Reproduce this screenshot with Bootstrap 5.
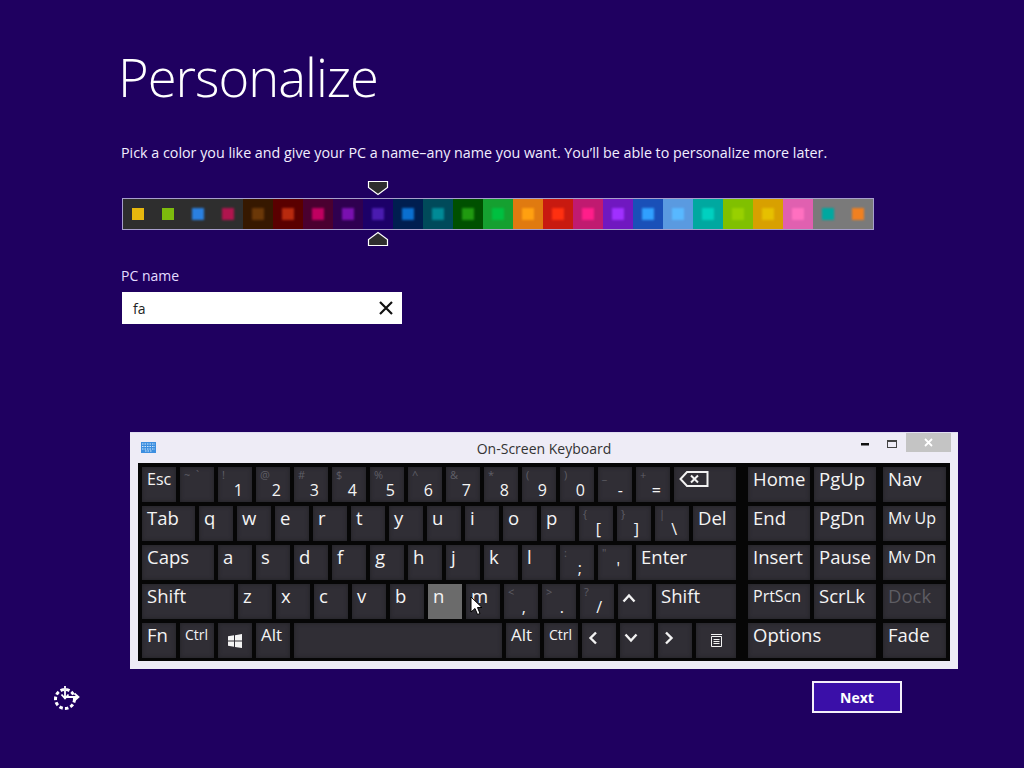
<!DOCTYPE html>
<html lang="en">
<head>
  <meta charset="UTF-8">
  <meta name="viewport" content="width=device-width, initial-scale=1.0">
  <link href="https://cdn.jsdelivr.net/npm/bootstrap@5.3.2/dist/css/bootstrap.min.css" rel="stylesheet">
  <script src="https://cdn.jsdelivr.net/npm/bootstrap@5.3.2/dist/js/bootstrap.bundle.min.js"></script>
  <title>Personalize</title>
  <style>
    body { background: #1f0060; font-family: "Open Sans", "Noto Sans", sans-serif; color: #fff; overflow: hidden; }
    .setup-page { height: 768px; width: 1024px; position: relative; }
    .setup-main { padding: 42px 0 0 121px; }
    .setup-title { font-size: 52.5px; font-weight: 300; line-height: 70px; margin: 0 0 0 -3px; letter-spacing: -1px; }
    .setup-intro { font-size: 14.3px; line-height: 20px; margin: 31px 0 0; color: #f2eeff; }
    .strip-wrap { margin: 35px 0 0 1px; width: 752px; position: relative; }
    .color-strip { display: flex; height: 32px; border: 1px solid #a79fcc; width: 752px; }
    .swatch { width: 30px; height: 30px; flex: none; display: flex; align-items: center; justify-content: center; }
    .swatch i { display: block; width: 12px; height: 12px; }
    .swatch i.soft { filter: blur(1.2px); }
    .strip-arrow { position: absolute; left: 245px; }
    .arrow-top { top: -18px; }
    .arrow-bottom { top: 33px; }
    .pc-label { font-size: 14px; line-height: 20px; margin: 36px 0 6px; color: #e4dcff; }
    .pc-input { width: 280px; height: 32px; margin-left: 1px; background: #fff; color: #222; font-size: 14px; padding: 0 8px 0 11px; }

    .osk-window { position: absolute; left: 130px; top: 432px; width: 828px; height: 237px; background: #eeecf6; padding: 0 8px; border-top: 1px solid #e0def0; }
    .osk-title { height: 30px; position: relative; color: #333; font-size: 14px; }
    .osk-icon { position: absolute; left: 3px; top: 9px; }
    .osk-btns { position: absolute; right: -1px; top: 0; }
    .osk-close { width: 45px; height: 19px; background: #c4c4c4; color: #fff; }
    .osk-board { background: #060606; padding: 4px; height: 198px; gap: 12px; }
    .key-rows { width: 594px; gap: 4px; }
    .key-col { gap: 4px; }
    .key-row { gap: 4px; }
    .kb-key { width: 34px; height: 35px; flex: none; background: #302e35; color: #f4f4f4; font-size: 18.5px; line-height: 24px; padding: 0 0 0 5px; box-shadow: inset 0 0 4px #222126; position: relative; white-space: nowrap; }
    .kb-key.sym { padding: 2px 9px 0 4px; display: flex; flex-direction: column; }
    .kb-key.sym.punct { padding-right: 12px; }
    .sym .up { font-size: 11px; line-height: 12px; color: #5f5e66; }
    .sym .low { font-size: 16px; line-height: 18px; text-align: right; }
    .kb-key.ico { display: flex; align-items: center; justify-content: center; padding: 0; }
    .ico.ico-up { padding: 0 12px 7px 0; }
    .ico.ico-mid { padding: 0 13px 6px 0; }
    .ico.ico-back { justify-content: flex-start; padding: 0 0 11px 5px; }
    .kb-key.key-hot { background: #6b6b6b; box-shadow: none; }
    .t-sm { font-size: 14px; }
    .t-md { font-size: 16px; }
    .t-lg { font-size: 17px; }
    .t-off { color: #5e5d63; }
    .kw-40 { width: 40px; }
    .kw-43 { width: 43px; }
    .kw-53 { width: 53px; }
    .kw-62 { width: 62px; }
    .kw-63 { width: 63px; }
    .kw-72 { width: 72px; }
    .kw-80 { width: 80px; }
    .kw-92 { width: 92px; }
    .kw-100 { width: 100px; }
    .kw-128 { width: 128px; }
    .kw-208 { width: 208px; }
    .nav-gap { margin-left: -5px; }
    .mouse-arrow { position: absolute; left: 4px; top: 12px; }

    .setup-foot { position: absolute; left: 53px; top: 681px; width: 849px; }
    .next-btn { width: 90px; height: 32px; background: #3a0fa8; border: 2px solid #f4effa; border-radius: 0; color: #fff; font-weight: 700; font-size: 14px; padding: 0; }
    .next-btn:hover { background: #3a0fa8; color: #fff; border-color: #f4effa; }
  </style>
</head>
<body>
<div class="setup-page">
  <div class="setup-main">
    <h1 class="setup-title">Personalize</h1>
    <p class="setup-intro">Pick a color you like and give your PC a name–any name you want. You’ll be able to personalize more later.</p>
    <div class="strip-wrap">
      <svg class="strip-arrow arrow-top" width="22" height="16" viewBox="0 0 22 16"><path d="M1.500 1.500h19v6l-9.500 7-9.500-7z" fill="#2d2d2d" stroke="#fff" stroke-width="1.200"/></svg>
      <div class="color-strip" id="strip"></div>
      <svg class="strip-arrow arrow-bottom" width="22" height="16" viewBox="0 0 22 16"><path d="M1.500 14.500h19v-6l-9.500-7-9.500 7z" fill="#2d2d2d" stroke="#fff" stroke-width="1.200"/></svg>
    </div>
    <div class="pc-label">PC name</div>
    <div class="pc-input d-flex align-items-center justify-content-between">
      <span>fa</span>
      <svg width="16" height="16" viewBox="0 0 16 16"><path d="M2 2l12 12M14 2L2 14" stroke="#111" stroke-width="2.200" fill="none"/></svg>
    </div>
  </div>

  <div class="osk-window">
    <div class="osk-title d-flex align-items-center justify-content-center">
      <svg class="osk-icon" width="15" height="11" viewBox="0 0 15 11"><rect width="15" height="11" fill="#3d8fe0"/><path d="M1 2h13M1 4.500h13M1 7h13M4 9h7" stroke="#cfe6fb" stroke-width="1" stroke-dasharray="1.500 1"/></svg>
      <span>On-Screen Keyboard</span>
      <div class="osk-btns d-flex">
        <svg width="45" height="19" viewBox="0 0 45 19"><rect x="0" y="10" width="8" height="2.500" fill="#111"/><rect x="26.500" y="7.500" width="9" height="7" fill="none" stroke="#444"/><rect x="26" y="7" width="10" height="2" fill="#444"/></svg>
        <div class="osk-close d-flex align-items-center justify-content-center">
          <svg width="9" height="9" viewBox="0 0 9 9"><path d="M1 1l7 7M8 1L1 8" stroke="#fff" stroke-width="1.800"/></svg>
        </div>
      </div>
    </div>
    <div class="osk-board d-flex">
      <div class="key-rows d-flex flex-column">
        <div class="key-row d-flex">
          <div class="kb-key t-md">Esc</div>
          <div class="kb-key sym"><span class="up">~ &nbsp;`</span></div>
          <div class="kb-key sym"><span class="up">!</span><span class="low">1</span></div>
          <div class="kb-key sym"><span class="up">@</span><span class="low">2</span></div>
          <div class="kb-key sym"><span class="up">#</span><span class="low">3</span></div>
          <div class="kb-key sym"><span class="up">$</span><span class="low">4</span></div>
          <div class="kb-key sym"><span class="up">%</span><span class="low">5</span></div>
          <div class="kb-key sym"><span class="up">^</span><span class="low">6</span></div>
          <div class="kb-key sym"><span class="up">&amp;</span><span class="low">7</span></div>
          <div class="kb-key sym"><span class="up">*</span><span class="low">8</span></div>
          <div class="kb-key sym"><span class="up">(</span><span class="low">9</span></div>
          <div class="kb-key sym"><span class="up">)</span><span class="low">0</span></div>
          <div class="kb-key sym"><span class="up">_</span><span class="low">-</span></div>
          <div class="kb-key sym"><span class="up">+</span><span class="low">=</span></div>
          <div class="kb-key ico ico-back kw-62">
            <svg width="30" height="16" viewBox="0 0 30 16"><path d="M8 1h20.500v14H8L1.500 8z" fill="none" stroke="#f2f2f2" stroke-width="2"/><path d="M12 4.500l7 7M19 4.500l-7 7" stroke="#f2f2f2" stroke-width="2"/></svg>
          </div>
        </div>
        <div class="key-row d-flex">
          <div class="kb-key kw-53">Tab</div>
          <div class="kb-key">q</div><div class="kb-key">w</div><div class="kb-key">e</div><div class="kb-key">r</div><div class="kb-key">t</div>
          <div class="kb-key">y</div><div class="kb-key">u</div><div class="kb-key">i</div><div class="kb-key">o</div><div class="kb-key">p</div>
          <div class="kb-key sym punct"><span class="up">{</span><span class="low">[</span></div>
          <div class="kb-key sym punct"><span class="up">}</span><span class="low">]</span></div>
          <div class="kb-key sym punct"><span class="up">|</span><span class="low">\</span></div>
          <div class="kb-key kw-43">Del</div>
        </div>
        <div class="key-row d-flex">
          <div class="kb-key kw-72">Caps</div>
          <div class="kb-key">a</div><div class="kb-key">s</div><div class="kb-key">d</div><div class="kb-key">f</div><div class="kb-key">g</div>
          <div class="kb-key">h</div><div class="kb-key">j</div><div class="kb-key">k</div><div class="kb-key">l</div>
          <div class="kb-key sym punct"><span class="up">:</span><span class="low">;</span></div>
          <div class="kb-key sym punct"><span class="up">"</span><span class="low">'</span></div>
          <div class="kb-key kw-100">Enter</div>
        </div>
        <div class="key-row d-flex">
          <div class="kb-key kw-92">Shift</div>
          <div class="kb-key">z</div><div class="kb-key">x</div><div class="kb-key">c</div><div class="kb-key">v</div><div class="kb-key">b</div>
          <div class="kb-key key-hot">n</div>
          <div class="kb-key">m
            <svg class="mouse-arrow" width="13" height="20" viewBox="0 0 13 20"><path d="M1 1v15l4-3.500 2.500 6 2.500-1-2.500-6H12z" fill="#fff" stroke="#000" stroke-width="1"/></svg>
          </div>
          <div class="kb-key sym punct"><span class="up">&lt;</span><span class="low">,</span></div>
          <div class="kb-key sym punct"><span class="up">&gt;</span><span class="low">.</span></div>
          <div class="kb-key sym punct"><span class="up">?</span><span class="low">/</span></div>
          <div class="kb-key ico ico-up"><svg width="14" height="10" viewBox="0 0 14 10"><path d="M1.500 8.500L7 2.500l5.500 6" fill="none" stroke="#f2f2f2" stroke-width="2.400"/></svg></div>
          <div class="kb-key kw-80">Shift</div>
        </div>
        <div class="key-row d-flex">
          <div class="kb-key">Fn</div>
          <div class="kb-key t-sm">Ctrl</div>
          <div class="kb-key ico"><svg width="14" height="14" viewBox="0 0 14 14"><path d="M0 2.200L6 1.300v5.200H0zM7 1.200L14 0v6.500H7zM0 7.500h6v5.200L0 11.800zM7 7.500h7V14l-7-1.100z" fill="#f4f4f4"/></svg></div>
          <div class="kb-key t-lg">Alt</div>
          <div class="kb-key kw-208"></div>
          <div class="kb-key t-lg">Alt</div>
          <div class="kb-key t-sm">Ctrl</div>
          <div class="kb-key ico ico-mid"><svg width="10" height="14" viewBox="0 0 10 14"><path d="M8 1.500L2.500 7 8 12.500" fill="none" stroke="#f2f2f2" stroke-width="2.400"/></svg></div>
          <div class="kb-key ico ico-mid"><svg width="14" height="10" viewBox="0 0 14 10"><path d="M1.500 1.500L7 7.500l5.500-6" fill="none" stroke="#f2f2f2" stroke-width="2.400"/></svg></div>
          <div class="kb-key ico ico-mid"><svg width="10" height="14" viewBox="0 0 10 14"><path d="M2 1.500L7.500 7 2 12.500" fill="none" stroke="#f2f2f2" stroke-width="2.400"/></svg></div>
          <div class="kb-key ico kw-40"><svg width="11" height="13" viewBox="0 0 11 13"><path d="M.5 2.500h10v10H.5z" fill="none" stroke="#f2f2f2"/><path d="M0 .5h11M2.500 5.500h6M2.500 7.500h6M2.500 9.500h6" stroke="#f2f2f2"/></svg></div>
        </div>
      </div>

      <div class="key-col d-flex flex-column">
        <div class="key-row d-flex"><div class="kb-key kw-62">Home</div><div class="kb-key kw-62">PgUp</div></div>
        <div class="key-row d-flex"><div class="kb-key kw-62">End</div><div class="kb-key kw-62">PgDn</div></div>
        <div class="key-row d-flex"><div class="kb-key kw-62">Insert</div><div class="kb-key kw-62">Pause</div></div>
        <div class="key-row d-flex"><div class="kb-key kw-62 t-md">PrtScn</div><div class="kb-key kw-62">ScrLk</div></div>
        <div class="key-row d-flex"><div class="kb-key kw-128">Options</div></div>
      </div>

      <div class="key-col d-flex flex-column nav-gap">
        <div class="kb-key kw-63">Nav</div>
        <div class="kb-key kw-63 t-md">Mv Up</div>
        <div class="kb-key kw-63 t-md">Mv Dn</div>
        <div class="kb-key kw-63 t-off">Dock</div>
        <div class="kb-key kw-63">Fade</div>
      </div>
    </div>
  </div>

  <div class="setup-foot d-flex justify-content-between align-items-start">
    <svg class="mt-1" width="27" height="25" viewBox="0 0 27 25">
      <circle cx="12" cy="14" r="9.500" fill="none" stroke="#fff" stroke-width="3" stroke-dasharray="3.500 2.200"/>
      <path d="M12 1v12M8.500 9.500L12 13.500l3.500-4M13 12h12M21.500 8.500L25.500 12l-4 3.500" fill="none" stroke="#fff" stroke-width="1.800"/>
    </svg>
    <button type="button" class="btn next-btn">Next</button>
  </div>
</div>

<script>
  // bg, inner square
  const colors = [
    ['#2e2e2e','#e6b70e'],['#2e2e2e','#7dbb0d'],['#2e2e2e','#2a80e0'],['#2e2e2e','#b0154e'],
    ['#361800','#6b3808'],['#5a0000','#b82a0e'],['#4a0030','#c00060'],['#2f0050','#7a10b0'],
    ['#1c0068','#4a1bb0'],['#001e50','#0a6fd0'],['#004a5a','#008a96'],['#005000','#209a10'],
    ['#15a030','#00c040'],['#e07a10','#ffa010'],['#c81a10','#ff3010'],['#c01a70','#ff1e8a'],
    ['#7018c0','#a030ff'],['#1a50b8','#30a0ff'],['#5a9ae0','#58b8ff'],['#00a8a0','#00d0c0'],
    ['#80c000','#98d000'],['#d8a000','#e6c000'],['#e060b0','#ff70c0'],['#7a7a7a','#00a8a0'],
    ['#7a7a7a','#f08020']
  ];
  document.getElementById('strip').innerHTML = colors.map((c, i) =>
    `<div class="swatch" style="background:${c[0]}"><i class="${i < 2 ? '' : 'soft'}" style="background:${c[1]}"></i></div>`
  ).join('');
</script>
</body>
</html>
